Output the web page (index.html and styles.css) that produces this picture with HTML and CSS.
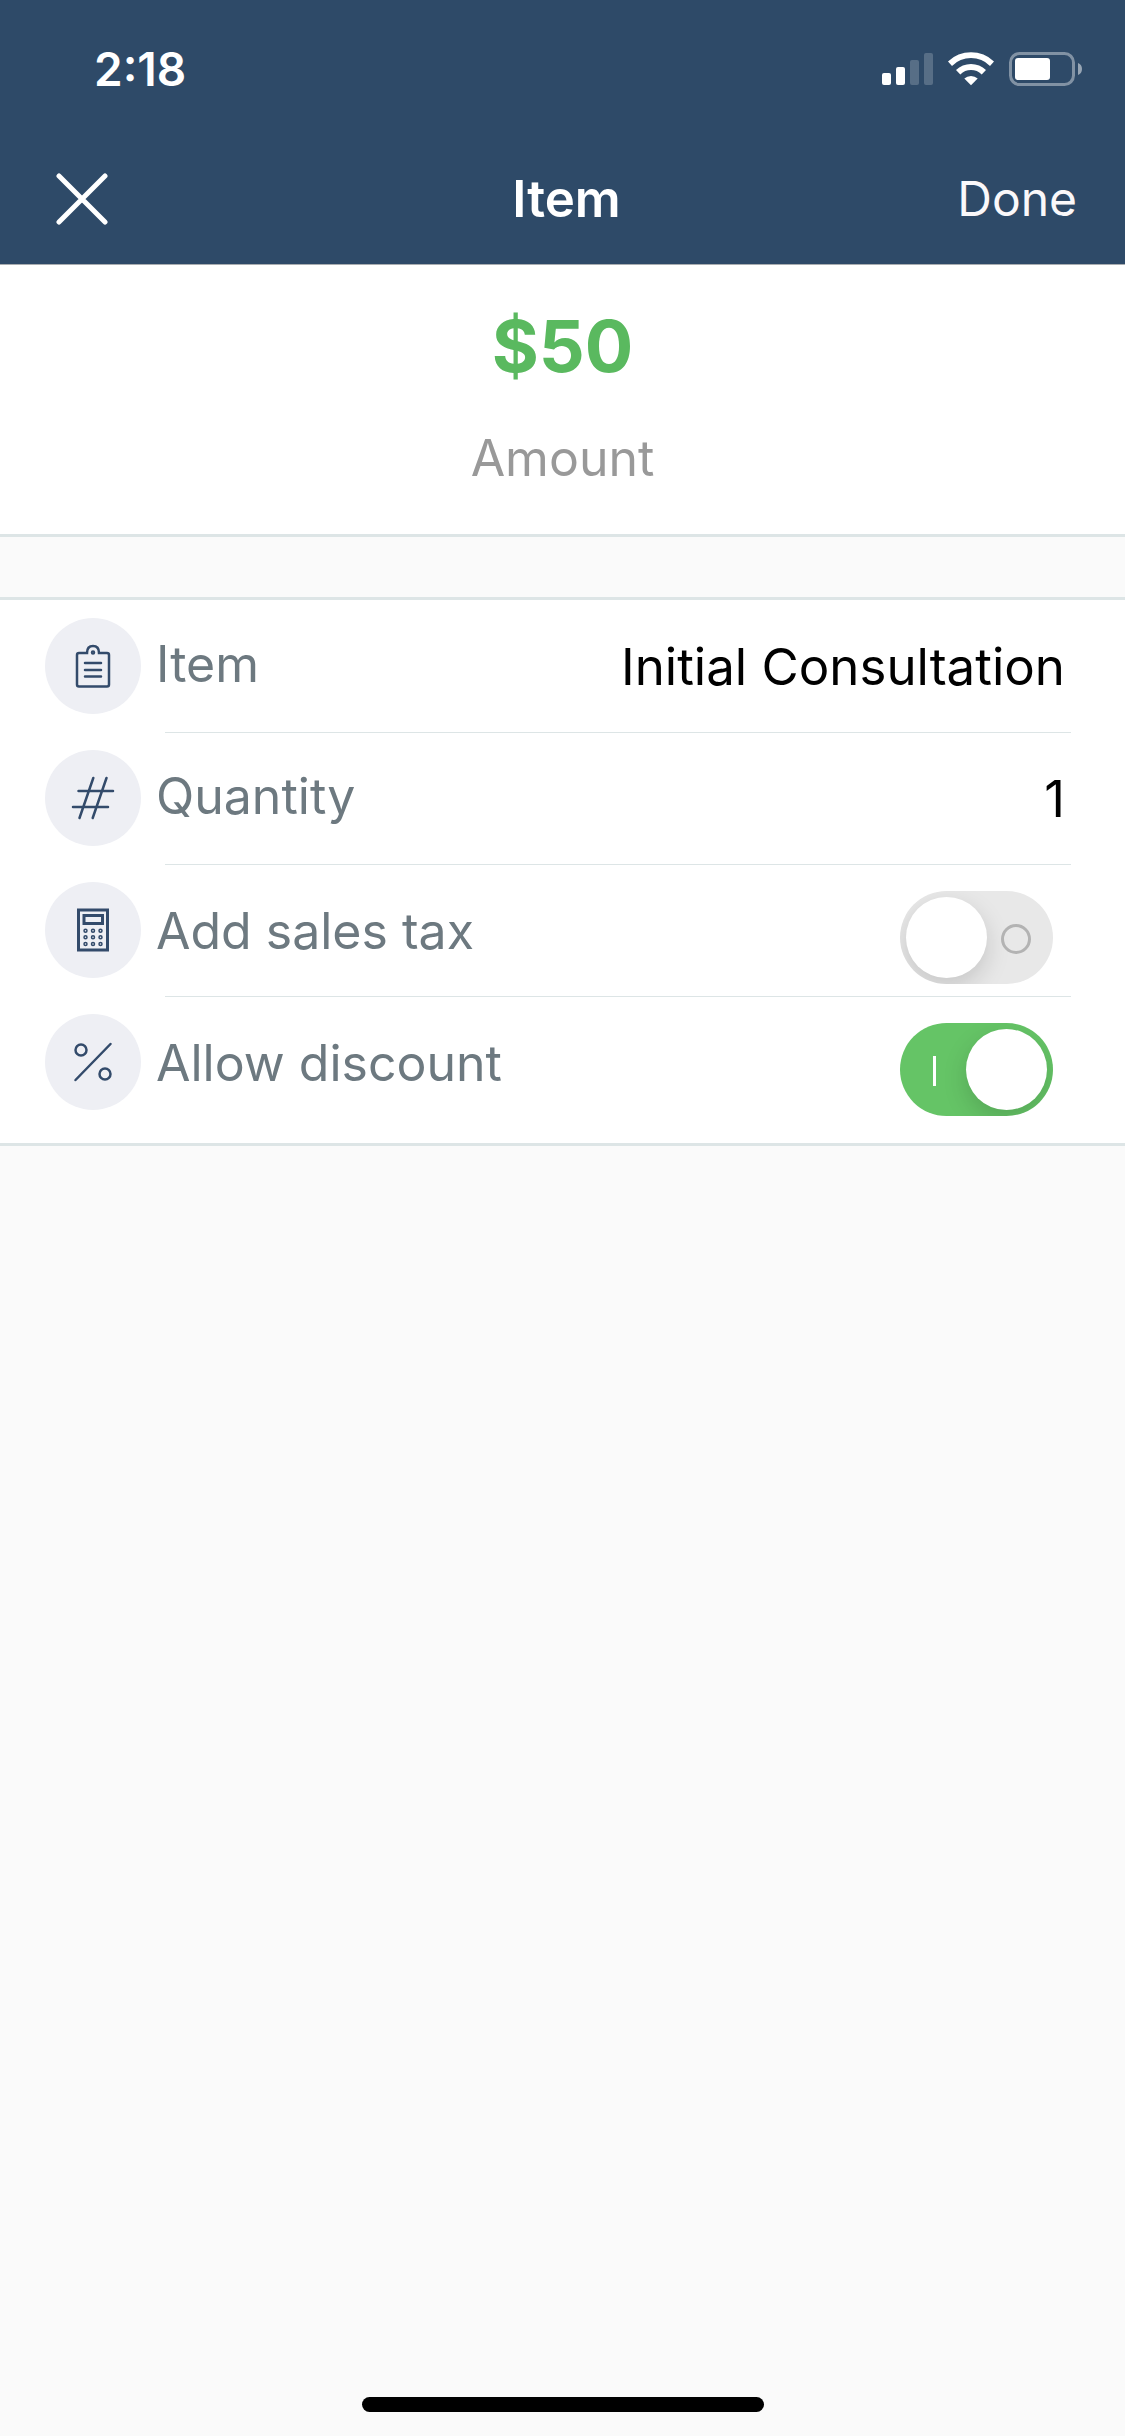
FILE: index.html
```
<!DOCTYPE html>
<html lang="en">
<head>
    <meta charset="UTF-8">
    <meta name="viewport" content="width=device-width, initial-scale=1.0">
    <title>Item</title>
    <link rel="stylesheet" href="styles.css">
</head>
<body>
    <header class="header">
        <!-- Status bar -->
        <div class="status-bar">
            <span class="time">2:18</span>
            <svg class="status-icons" width="202" height="36" viewBox="0 0 202 36" fill="#fff">
                <rect x="0" y="22" width="9" height="12" rx="2"/>
                <rect x="14" y="16" width="9" height="18" rx="2"/>
                <rect x="28" y="9" width="9" height="25" rx="2" opacity="0.2"/>
                <rect x="42" y="2" width="9" height="32" rx="2" opacity="0.2"/>
                <path d="M66 10.5a33 33 0 0 1 46 0l-4 4.4a27 27 0 0 0-38 0z"/>
                <path d="M74 19a21.5 21.5 0 0 1 30 0l-4.3 4.4a15.500 15.500 0 0 0-21.4 0z"/>
                <path d="M82.3 27.5a10 10 0 0 1 13.4 0L89 34.2z"/>
                <rect x="128.5" y="2.5" width="63" height="31" rx="9" fill="none" stroke="#fff" stroke-width="3" opacity="0.4"/>
                <rect x="133" y="7" width="35" height="22" rx="3"/>
                <path d="M196 12a6.500 6.500 0 0 1 0 12z" opacity="0.5"/>
            </svg>
        </div>
        <!-- Navigation -->
        <nav class="nav">
            <button class="nav-button close" type="button" aria-label="Close">
                <svg width="52" height="52" viewBox="0 0 52 52" stroke="#fff" stroke-width="5" stroke-linecap="round">
                    <path d="M3 3l46 46M49 3L3 49"/>
                </svg>
            </button>
            <h1 class="title">Item</h1>
            <button class="nav-button done" type="button">Done</button>
        </nav>
    </header>

    <main>
        <section class="amount">
            <div class="amount-value">$50</div>
            <div class="amount-label">Amount</div>
        </section>

        <form class="fields">
            <div class="row">
                <svg class="icon" viewBox="0 0 96 96">
                    <path d="M42 35h-8a2 2 0 0 0-2 2v29.5a2 2 0 0 0 2 2h28a2 2 0 0 0 2-2V37a2 2 0 0 0-2-2h-8c0-4-2-7-6-7s-6 3-6 7z"/>
                    <path d="M40 45h16M40 52h16M40 58.5h16"/>
                    <circle cx="48" cy="34.5" r="1"/>
                </svg>
                <label class="label" for="item">Item</label>
                <input class="value" type="text" id="item" value="Initial Consultation">
            </div>
            <div class="row">
                <svg class="icon" viewBox="0 0 96 96">
                    <path d="M48.3 28L34.500 68M61.5 28L47.7 68M33.500 41H68M28 57h35"/>
                </svg>
                <label class="label" for="quantity">Quantity</label>
                <input class="value" type="text" id="quantity" inputmode="numeric" value="1">
            </div>
            <div class="row row-switch">
                <svg class="icon" viewBox="0 0 96 96">
                    <rect x="33.5" y="28" width="29" height="40" stroke-width="3"/>
                    <rect x="39" y="33.5" width="18.500" height="8" stroke-width="3"/>
                    <g stroke-width="1.5">
                        <circle cx="40.5" cy="48.7" r="1.5"/>
                        <circle cx="48" cy="48.7" r="1.5"/>
                        <circle cx="55.5" cy="48.7" r="1.5"/>
                        <circle cx="40.5" cy="55.3" r="1.5"/>
                        <circle cx="48" cy="55.3" r="1.5"/>
                        <circle cx="55.5" cy="55.3" r="1.5"/>
                        <circle cx="40.5" cy="62" r="1.5"/>
                        <circle cx="48" cy="62" r="1.5"/>
                        <circle cx="55.5" cy="62" r="1.5"/>
                    </g>
                </svg>
                <label class="label" for="tax">Add sales tax</label>
                <input class="switch" type="checkbox" role="switch" id="tax">
            </div>
            <div class="row row-switch">
                <svg class="icon" viewBox="0 0 96 96">
                    <circle cx="36" cy="36" r="5.5"/>
                    <circle cx="60" cy="60" r="5.5"/>
                    <path d="M65.5 30L30.5 66"/>
                </svg>
                <label class="label" for="discount">Allow discount</label>
                <input class="switch" type="checkbox" role="switch" id="discount" checked>
            </div>
        </form>
    </main>

    <!-- Home indicator -->
    <div class="home-indicator"></div>
</body>
</html>
```

FILE: styles.css
```
* {
    box-sizing: border-box;
}
body {
    display: flex;
    flex-direction: column;
    min-height: 100vh;
    margin: 0;
    background-color: #fafafa;
    font-family: Inter, "Liberation Sans", sans-serif;
    font-size: 50px;
    line-height: 60px;
}

/* Header */
.header {
    background-color: #2e4a68;
    border-bottom: 1px solid #a9adb1;
    color: #fff;
}
.status-bar {
    display: flex;
    justify-content: space-between;
    align-items: center;
    height: 132px;
    padding: 6px 41px 0 94px;
}
.time {
    font-size: 46px;
    font-weight: 600;
    line-height: 54px;
}
.nav {
    display: grid;
    grid-template-columns: 1fr auto 1fr;
    align-items: center;
    height: 132px;
    padding: 2px 48px 0 56px;
}
.nav-button {
    padding: 0;
    border: none;
    background: none;
    color: #faf8fa;
    font: inherit;
    cursor: pointer;
}
.close {
    display: flex;
    justify-self: start;
}
.done {
    justify-self: end;
    font-size: 48px;
}
.title {
    margin: 0;
    font-size: 51px;
    font-weight: 600;
}

/* Amount */
.amount {
    padding: 37px 0 46px;
    border-bottom: 3px solid #dde5e6;
    background-color: #fff;
    text-align: center;
}
.amount-value {
    margin-bottom: 38px;
    color: #5ab95f;
    font-size: 72px;
    font-weight: 700;
    line-height: 88px;
}
.amount-label {
    color: #999;
}

/* Fields */
.fields {
    margin-top: 60px;
    padding-bottom: 15px;
    border-top: 3px solid #dde5e6;
    border-bottom: 3px solid #dde5e6;
    background-color: #fff;
}
.row {
    position: relative;
    display: flex;
    align-items: center;
    height: 132px;
    padding: 0 60px 0 45px;
}
.row + .row::before {
    content: "";
    position: absolute;
    top: 0;
    left: 165px;
    right: 54px;
    height: 1px;
    background-color: #dde5e6;
}
.icon {
    flex: none;
    width: 96px;
    height: 96px;
    margin-right: 15px;
    border-radius: 50%;
    background-color: #eeeff4;
    fill: none;
    stroke: #334b6b;
    stroke-width: 2.5;
    stroke-linecap: round;
}
.label {
    margin-bottom: 4px;
    color: #6d7980;
}
.row-switch .label {
    margin: 2px 0 0;
}
.value {
    flex: 1;
    min-width: 0;
    padding: 2px 0 0;
    border: none;
    outline: none;
    background: none;
    color: #000;
    font: inherit;
    font-size: 51px;
    text-align: right;
}

/* Switch */
.row-switch {
    padding-right: 72px;
}
.switch {
    appearance: none;
    position: relative;
    flex: none;
    width: 153px;
    height: 93px;
    margin: 15px 0 0 auto;
    border-radius: 47px;
    background-color: #e8e8e8;
    overflow: hidden;
    cursor: pointer;
}
.switch::before {
    content: "";
    position: absolute;
    top: 6px;
    left: 6px;
    width: 81px;
    height: 81px;
    border-radius: 50%;
    background-color: #fff;
    box-shadow: 0 9px 24px rgba(0, 0, 0, 0.15);
}
.switch::after {
    content: "";
    position: absolute;
    top: 33px;
    right: 22px;
    width: 24px;
    height: 24px;
    border: 3px solid #b3b3b3;
    border-radius: 50%;
}
.switch:checked {
    background-color: #65c466;
}
.switch:checked::before {
    left: 66px;
}
.switch:checked::after {
    left: 33px;
    width: 3px;
    height: 30px;
    border: none;
    border-radius: 0;
    background-color: #fff;
}

.home-indicator {
    width: 402px;
    height: 15px;
    margin: auto auto 24px;
    border-radius: 8px;
    background-color: #000;
}
```
